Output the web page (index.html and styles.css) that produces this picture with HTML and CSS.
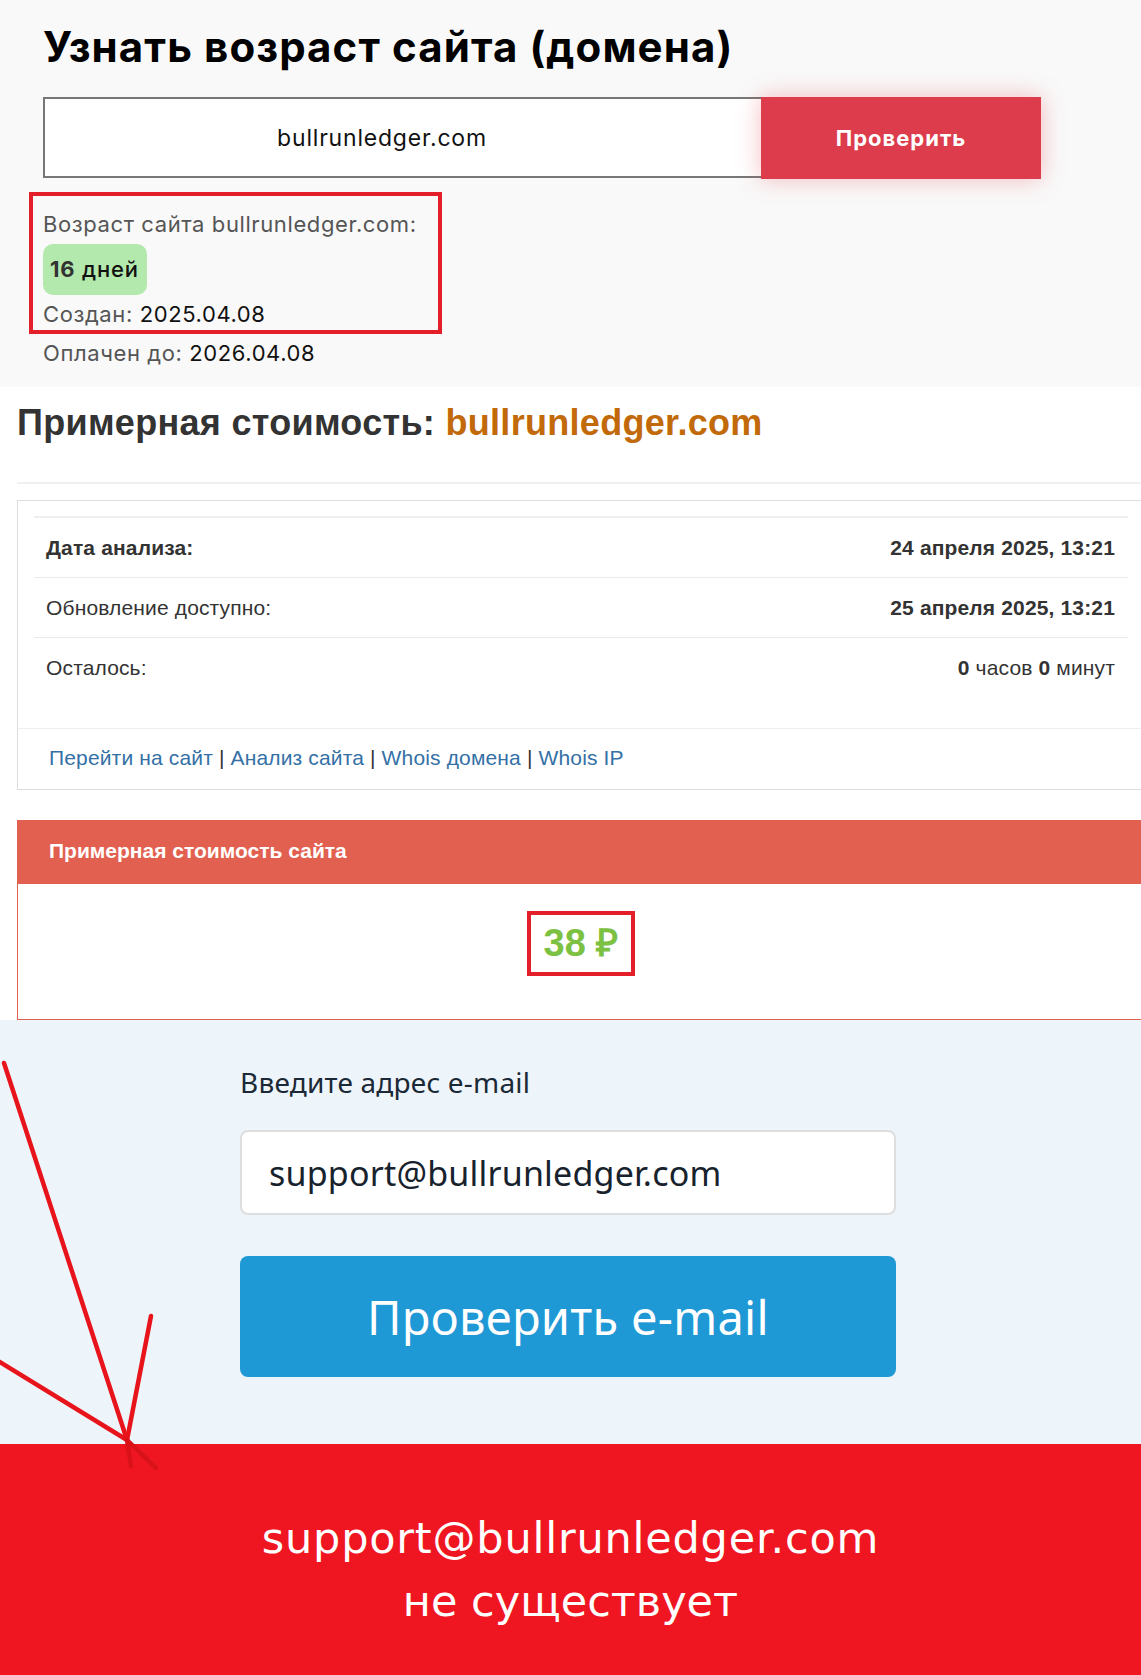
FILE: index.html
```html
<!DOCTYPE html>
<html>
	<head>
		<meta charset="utf-8">
		<link rel="stylesheet" href="styles.css">
	</head>
	<body>

		<section class="age">
			<h1 class="age-title">Узнать возраст сайта (домена)</h1>
			<form class="age-form">
				<input class="age-input" type="text" value="bullrunledger.com">
				<button class="age-btn" type="button">Проверить</button>
			</form>
			<div class="age-result mark">
				<div class="age-line">Возраст сайта bullrunledger.com:</div>
				<span class="age-badge"><b>16</b> дней</span>
				<div class="age-line created">Создан: <span class="val">2025.04.08</span></div>
			</div>
			<div class="age-line paid">Оплачен до: <span class="val">2026.04.08</span></div>
		</section>

		<section class="price">
			<h2 class="price-title">Примерная стоимость: <span class="domain">bullrunledger.com</span></h2>
			<hr class="price-hr">

			<div class="card">
				<table class="info">
					<tr>
						<td class="bold">Дата анализа:</td>
						<td class="right bold">24 апреля 2025, 13:21</td>
					</tr>
					<tr>
						<td>Обновление доступно:</td>
						<td class="right bold">25 апреля 2025, 13:21</td>
					</tr>
					<tr>
						<td>Осталось:</td>
						<td class="right"><b>0</b> часов <b>0</b> минут</td>
					</tr>
				</table>
				<div class="card-links">
					<a href="#">Перейти на сайт</a> | <a href="#">Анализ сайта</a> | <a href="#">Whois домена</a> | <a href="#">Whois IP</a>
				</div>
			</div>

			<div class="panel">
				<div class="panel-head">Примерная стоимость сайта</div>
				<div class="panel-body">
					<span class="price-val mark">38 ₽</span>
				</div>
			</div>
		</section>

		<section class="mail">
			<div class="mail-form">
				<label class="mail-label">Введите адрес e-mail</label>
				<input class="mail-input" type="text" value="support@bullrunledger.com">
				<button class="mail-btn" type="button">Проверить e-mail</button>
			</div>
		</section>

		<section class="verdict">
			<p><span class="verdict-mail">support@bullrunledger.com</span><br>не существует</p>
		</section>

		<!-- hand drawn arrow over the page -->
		<svg class="arrow" width="1141" height="1675" viewBox="0 0 1141 1675">
			<g stroke="#e8141c" stroke-width="4.5" stroke-linecap="round" fill="none">
				<line x1="4" y1="1063" x2="127" y2="1440" />
				<line x1="151" y1="1316" x2="127" y2="1440" />
				<line x1="-2" y1="1361" x2="127" y2="1440" />
			</g>
			<g stroke="#d9121a" stroke-width="4.5" stroke-linecap="round" fill="none">
				<line x1="127" y1="1440" x2="131" y2="1466" />
				<line x1="127" y1="1440" x2="156" y2="1468" />
			</g>
		</svg>

	</body>
</html>
```

FILE: styles.css
```css
html,body {
	margin:0;
	padding:0;
	background: #ffffff;
}
body {
	position: relative;
	width: 1141px;
	overflow-x: hidden;
	font-family: "Liberation Sans", Arial, sans-serif;
}

/* annotation frame */
.mark {
	border: 4px solid #e3202a;
}

/* Age block */
.age {
	background: #f9f9f9;
	padding: 22px 0 18px 43px;
	font-family: Inter, "Open Sans", sans-serif;
}
.age-title {
	margin: 0;
	font-size: 42px;
	line-height: 50px;
	font-weight: 700;
	color: #000;
	letter-spacing: 1.1px;
}
.age-form {
	display: flex;
	margin: 25px 0 0 0;
	width: 998px;
}
.age-input {
	box-sizing: border-box;
	width: 718px;
	height: 81px;
	margin: 0;
	border: 2px solid #777;
	border-right: none;
	background: #fff;
	padding: 0 42px 0 0;
	text-align: center;
	font-family: Inter, sans-serif;
	font-size: 23px;
	letter-spacing: 0.8px;
	color: #111;
	outline: none;
}
.age-btn {
	width: 280px;
	height: 82px;
	border: none;
	background: #dc3c4b;
	color: #fff;
	font-family: Inter, sans-serif;
	font-weight: 700;
	font-size: 22px;
	letter-spacing: 1px;
	box-shadow: 0 0 22px rgba(230, 70, 80, 0.35);
}
.age-result {
	display: inline-block;
	margin: 13px 0 0 -14px;
	padding: 12px 10px 0 10px;
	width: 385px;
}
.age-line {
	font-size: 22px;
	line-height: 32px;
	letter-spacing: 0.6px;
	color: #555;
}
.age-line .val {
	color: #111;
}
.age-badge {
	display: inline-block;
	margin-top: 4px;
	height: 51px;
	line-height: 51px;
	padding: 0 8px 0 7px;
	border-radius: 10px;
	background: #b4e9ad;
	font-size: 22px;
	letter-spacing: 0.8px;
	font-weight: 500;
	color: #111;
}
.age-badge b {
	color: #333;
}
.created {
	margin-top: 3px;
}
.paid {
	margin-top: 3px;
}

/* Price block */
.price {
	padding: 16px 0 0 17px;
	width: 1128px;
	color: #333;
}
.price-title {
	margin: 0;
	font-size: 36px;
	line-height: 40px;
	font-weight: 700;
	letter-spacing: 0.3px;
	color: #333;
}
.price-title .domain {
	color: #c26a0a;
}
.price-hr {
	margin: 39px 0 16px 0;
	border: none;
	border-top: 2px solid #f0f0f0;
	height: 0;
}
.card {
	border: 1px solid #ddd;
	background: #fff;
}
.info {
	margin: 15px 16px 31px 16px;
	width: 1094px;
	border-collapse: collapse;
	border-top: 2px solid #eee;
	font-size: 21px;
	letter-spacing: 0.15px;
}
.info td {
	height: 59px;
	padding: 0 12px;
	border-bottom: 1px solid #eaeaea;
	color: #333;
}
.info tr:last-child td {
	border-bottom: none;
}
.info .right {
	text-align: right;
	padding-right: 13px;
}
.bold {
	font-weight: 700;
}
.card-links {
	border-top: 1px solid #eee;
	padding: 0 31px;
	height: 60px;
	line-height: 58px;
	font-size: 21px;
	letter-spacing: 0.15px;
	color: #333;
}
.card-links a {
	color: #3470a6;
	text-decoration: none;
}

.panel {
	margin-top: 30px;
	border: 1px solid #e2604f;
	border-top: none;
}
.panel-head {
	background: #e2604f;
	height: 64px;
	line-height: 62px;
	padding-left: 31px;
	color: #fff;
	font-size: 21px;
	font-weight: 700;
}
.panel-body {
	background: #fff;
	padding: 27px 0 43px 0;
	text-align: center;
}
.price-val {
	display: inline-block;
	padding: 0 13px;
	height: 57px;
	line-height: 57px;
	font-size: 38px;
	font-weight: 700;
	color: #7cc142;
}

/* E-mail check */
.mail {
	background: #eef5fa;
	padding: 45px 0 67px 0;
	font-family: "Noto Sans", "Open Sans", sans-serif;
}
.mail-form {
	width: 656px;
	margin: 0 0 0 240px;
	display: flex;
	flex-direction: column;
}
.mail-label {
	font-size: 28px;
	line-height: 34px;
	letter-spacing: 0.2px;
	color: #1b2936;
}
.mail-input {
	box-sizing: border-box;
	margin-top: 31px;
	height: 85px;
	border: 2px solid #dedede;
	border-radius: 8px;
	background: #fff;
	padding: 0 0 0 27px;
	font-family: "Noto Sans", sans-serif;
	font-size: 34px;
	letter-spacing: 0.2px;
	color: #17222d;
	outline: none;
}
.mail-btn {
	margin-top: 41px;
	height: 121px;
	border: none;
	border-radius: 8px;
	background: #1f98d6;
	color: #fff;
	font-family: "Noto Sans", sans-serif;
	font-size: 47px;
	letter-spacing: 0.3px;
}

/* Result */
.verdict {
	background: #ef1621;
	height: 235px;
	box-sizing: border-box;
	padding-top: 63px;
	text-align: center;
	font-family: "DejaVu Sans", sans-serif;
	font-size: 43px;
	color: #fff;
}
.verdict p {
	margin: 0;
	line-height: 63px;
}
.verdict-mail {
	letter-spacing: 0.8px;
}

.arrow {
	position: absolute;
	left: 0;
	top: 0;
	pointer-events: none;
}
```
